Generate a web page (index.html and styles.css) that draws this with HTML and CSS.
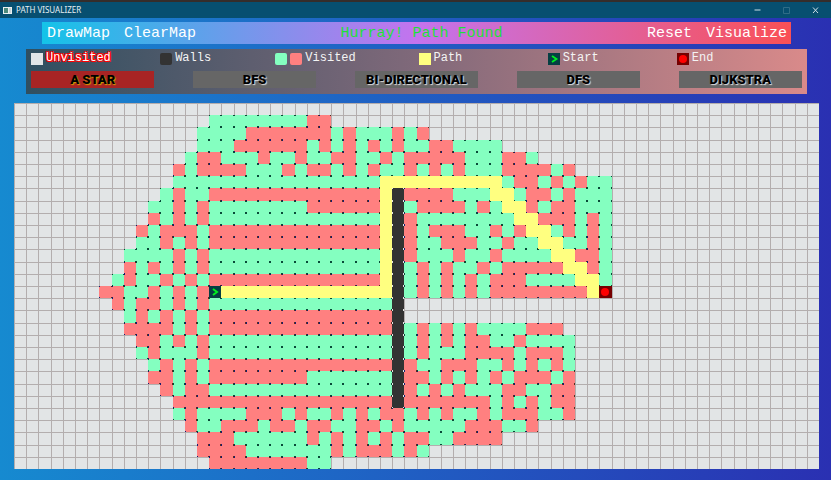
FILE: index.html
```html
<!DOCTYPE html>
<html lang="en">
<head>
<meta charset="utf-8">
<title>PATH VISUALIZER</title>
<link rel="stylesheet" href="styles.css">
</head>
<body>
<header class="titlebar">
  <svg class="app-icon" viewBox="0 0 9 7" aria-hidden="true"><rect width="9" height="7" fill="#e9f0f0"/><rect x="1" y="1" width="4" height="5" fill="#4c8a7c"/><rect x="6" y="1" width="2" height="5" fill="#c9d5d8"/></svg>
  <h1 class="title">PATH VISUALIZER</h1>
  <div class="window-controls">
    <button class="win" type="button" aria-label="Minimize"><svg viewBox="0 0 9 9"><path d="M1.500 4h6"/></svg></button>
    <button class="win win-off" type="button" aria-label="Maximize" disabled><svg viewBox="0 0 9 9"><path d="M1.500 1.500h6v6h-6z"/></svg></button>
    <button class="win" type="button" aria-label="Close"><svg viewBox="0 0 9 9"><path d="M2 1.500l5 5.500M7 1.500L2 7"/></svg></button>
  </div>
</header>
<main class="app">
  <nav class="toolbar">
    <div class="group">
      <button type="button">DrawMap</button>
      <button type="button">ClearMap</button>
    </div>
    <p class="status" role="status">Hurray! Path Found</p>
    <div class="group">
      <button type="button">Reset</button>
      <button type="button">Visualize</button>
    </div>
  </nav>
  <section class="panel">
    <ul class="legend">
      <li><span class="swatch unvisited"></span><span class="hot">Unvisited</span></li>
      <li><span class="swatch wall"></span>Walls</li>
      <li class="double"><span class="swatch open"></span><span class="swatch closed"></span>Visited</li>
      <li><span class="swatch path"></span>Path</li>
      <li><svg class="swatch" viewBox="0 0 12 12" aria-hidden="true"><rect width="12" height="12" fill="#063f43"/><path d="M4 3l4.500 3L4 9" fill="none" stroke="#00f020" stroke-width="1.800"/></svg>Start</li>
      <li><svg class="swatch" viewBox="0 0 12 12" aria-hidden="true"><rect width="12" height="12" fill="#760000"/><circle cx="6" cy="6" r="4" fill="#ff0000"/></svg>End</li>
    </ul>
    <div class="algorithms">
      <button type="button" class="active">A STAR</button>
      <button type="button">BFS</button>
      <button type="button">BI-DIRECTIONAL</button>
      <button type="button">DFS</button>
      <button type="button">DIJKSTRA</button>
    </div>
  </section>
  <svg class="board" id="board" viewBox="0 0 805 366" role="img" aria-label="Search grid"></svg>
</main>
<script src="board.js"></script>
</body>
</html>
```
FILE: styles.css
```css
* { box-sizing: border-box; }
body {
  margin: 0;
  min-height: 100vh;
  border-top: 2px solid #352d2b;
  background: linear-gradient(90deg, #168ad0, #1f62c4 45%, #2a30b2);
}
button {
  border: 0;
  padding: 0;
  background: none;
  color: inherit;
  font: inherit;
}
.titlebar {
  display: flex;
  align-items: center;
  gap: 4px;
  height: 16px;
  padding: 0 11px 0 3px;
  background: #074f70;
  color: #e6eef2;
}
.app-icon { width: 9px; height: 7px; }
.title {
  margin: 0;
  font: 400 8px/16px "Noto Sans", sans-serif;
}
.window-controls { display: flex; gap: 20px; margin-left: auto; }
.win { display: flex; width: 9px; height: 9px; }
.win svg { width: 9px; height: 9px; fill: none; stroke: #cfe0e6; stroke-width: 1; }
.win-off { opacity: 0.2; }
.app { padding: 4px 12px 11px 14px; }
.toolbar {
  display: flex;
  align-items: center;
  justify-content: space-between;
  height: 22px;
  margin: 0 28px;
  padding: 2px 4px 0 5px;
  background: linear-gradient(90deg, #14c3e8, #c473ee 50%, #fa5055);
  color: #fff;
  font: 15px/20px "Courier New", "Liberation Mono", monospace;
}
.group { display: flex; gap: 14px; }
.status { margin: 0; color: #1fe03a; }
.panel {
  margin: 5px 12px 9px;
  padding: 2px 5px 6px;
  background: linear-gradient(90deg, #2f4f60, #80697a 50%, #d98a8a);
}
.legend {
  display: grid;
  grid-template-columns: repeat(6, 1fr);
  margin: 0 -4px 5px 0;
  padding: 0;
  list-style: none;
  color: #f4f4f4;
  font: 12px/15px "Courier New", "Liberation Mono", monospace;
}
.legend li { display: flex; align-items: center; gap: 3px; }
.legend .double { margin-left: -14px; }
.swatch { flex: none; width: 12px; height: 12px; }
.unvisited { background: #e2e5e6; }
.wall { background: #333; border-radius: 2px; }
.open { background: #84ffc0; border-radius: 2px; }
.closed { background: #ff8080; border-radius: 2px; }
.path { background: #ffff80; }
.hot {
  color: #fff;
  text-shadow: 1px 1px #f00, -1px -1px #f00, 1px -1px #f00, -1px 1px #f00, 0 0 2px #f00;
}
.algorithms { display: flex; justify-content: space-between; }
.algorithms button {
  width: 16%;
  height: 17px;
  background: #666;
  color: #000;
  font: 900 13px/17px Roboto, sans-serif;
  text-shadow: 1px 1px 1px #ddd;
}
.algorithms .active { background: #a82424; text-shadow: 1px 1px 1px #d8a000; }
.board { display: block; width: 100%; height: auto; background: #e2e5e6; }
.board .line { fill: #b3aeae; }
.board .g { fill: #84ffc0; }
.board .r { fill: #ff8080; }
.board .y { fill: #ffff80; }
.board .w { fill: #333; }
.board .s { fill: #063f43; }
.board .e { fill: #760000; }
.board .dot-g { fill: #084a38; }
.board .dot-l { fill: #151c70; }
.board .dot-r { fill: #5a2c1c; }
.board .dot-w { fill: #e8e8e8; }
.board .arrow { fill: none; stroke: #00f020; stroke-width: 2; }
.board .target { fill: #ff0000; }
```
FILE: board.js
```js
// Each row: first occupied column, then runs of cell type + length.
// g, r = visited; y = path; w = wall; s = start; e = end
const rows = [
  "",
  "16 g8 r2",
  "15 g4 r7 g1 r1 g3 r1 g1 r1",
  "15 g3 r6 g1 r1 g1 r1 g1 r1 g1 r1 g2 r2 g4",
  "14 g1 r2 g3 r1 g2 r1 g2 r2 g2 r1 g1 r5 g3 r2 g1",
  "13 r1 g1 r4 g3 r1 g1 r2 g1 r1 g1 r1 g2 r1 g1 r1 g1 r1 g3 r4 g1 r1",
  "13 g17 y10 g1 r2 g1 r1 g1 r1 g2",
  "12 g1 r1 g2 r14 y1 w1 r4 g3 y2 g1 r2 g1 r1 g3",
  "11 g2 r1 g1 r1 g8 r6 y1 w1 g1 r4 g1 r1 g1 y2 r1 g1 r2 g3",
  "11 r1 g1 r1 g1 r1 g14 y1 w1 r1 g8 y2 r3 g1 r1 g1",
  "10 r1 g1 r3 g1 r14 y1 w1 r1 g1 r3 g2 r1 g1 r1 y2 g1 r1 g1 r1 g1",
  "10 g2 r1 g1 r1 g1 r14 y1 w1 r1 g2 r3 g2 r1 g2 y2 g2 r1 g1",
  "9 g4 r1 g1 r1 g14 y1 w1 r1 g3 r1 g2 r1 g4 y2 r2 g1",
  "9 r1 g1 r1 g1 r1 g1 r1 g14 y1 w1 g1 r1 g1 r1 g2 r1 g1 r5 y2 r1 g1",
  "8 g1 r1 g2 r1 g1 r1 g1 r14 y1 w1 g1 r1 g1 r1 g1 r1 g1 r3 g4 y2 g1",
  "7 r2 g2 r1 g1 r1 g1 r1 s1 y14 w1 g1 r1 g1 r1 g1 r1 g1 r8 y1 e1",
  "8 r1 g1 r2 g1 r1 g1 r1 g15 w1",
  "9 g1 r1 g1 r1 g1 r1 g1 r15 w1",
  "9 r4 g1 r1 g1 r15 w1 g1 r1 g1 r1 g1 r1 g4 r3",
  "10 r2 g1 r1 g1 r1 g15 w1 g1 r1 g1 r1 g1 r2 g2 r1 g4",
  "10 g1 r1 g3 r1 g15 w1 g1 r1 g3 r4 g1 r3 g1",
  "11 g1 r1 g1 r1 g1 r15 w1 r1 g2 r3 g2 r1 g1 r1 g1 r1 g1",
  "11 r2 g1 r1 g1 r8 g7 w1 r2 g1 r1 g1 r1 g1 r1 g1 r3 g1 r1",
  "12 r1 g1 r2 g15 w1 r1 g1 r1 g1 r1 g3 r2 g2 r2",
  "13 r18 w1 r7 g1 r1 g1 r1 g1 r2",
  "13 g1 r1 g4 r3 g1 r1 g2 r1 g1 r1 g1 r2 g1 r1 g1 r1 g2 r1 g1 r3 g2 r1",
  "14 r1 g2 r3 g1 r2 g1 r2 g2 r2 g1 r1 g5 r3 g2 r1",
  "15 r3 g6 r1 g1 r1 g1 r1 g1 r1 g1 r2 g2 r4",
  "15 r4 g7 r1 g1 r3 g1 r1 g1",
  "16 r8 g2"
];

const COLS = 66, ROWS = 30, W = 805, H = 366;
const px = c => Math.round(c * W / COLS);
const py = r => Math.round(r * H / ROWS);
const rect = (x, y, w, h, cls) =>
  `<rect x="${x}" y="${y}" width="${w}" height="${h}" class="${cls}"/>`;

let lines = "", cells = "", dots = "", route = "", markers = "";
for (let c = 0; c <= COLS; c++) lines += rect(px(c), 0, 1, H, "line");
for (let r = 0; r <= ROWS; r++) lines += rect(0, py(r), W, 1, "line");

rows.forEach((row, r) => {
  if (!row) return;
  const [first, ...runs] = row.split(" ");
  let c = Number(first);
  for (const run of runs) {
    const type = run[0];
    for (let n = Number(run.slice(1)); n > 0; n--, c++) {
      const x = px(c), y = py(r), x2 = px(c + 1), y2 = py(r + 1);
      const cell = rect(x, y, x2 - x, y2 - y, type);
      if ("yse".includes(type)) {
        route += cell;
        if (type === "s") markers += `<path class="arrow" d="M${x + 4} ${y + 3}l4 3l-4 3"/>`;
        if (type === "e") markers += `<circle class="target" cx="${x + 6}" cy="${y + 6}" r="4"/>`;
        continue;
      }
      cells += cell;
      const left = { g: "dot-g", r: "dot-l", w: "dot-w" }[type];
      const right = { g: "dot-g", r: "dot-r", w: "dot-w" }[type];
      for (const cy of [y, y2 - 1]) {
        dots += rect(x, cy, 1, 1, left) + rect(x2 - 1, cy, 1, 1, right);
      }
    }
  }
});
document.getElementById("board").innerHTML =
  `<g shape-rendering="crispEdges">${lines}${cells}${dots}${route}</g>${markers}`;
```
